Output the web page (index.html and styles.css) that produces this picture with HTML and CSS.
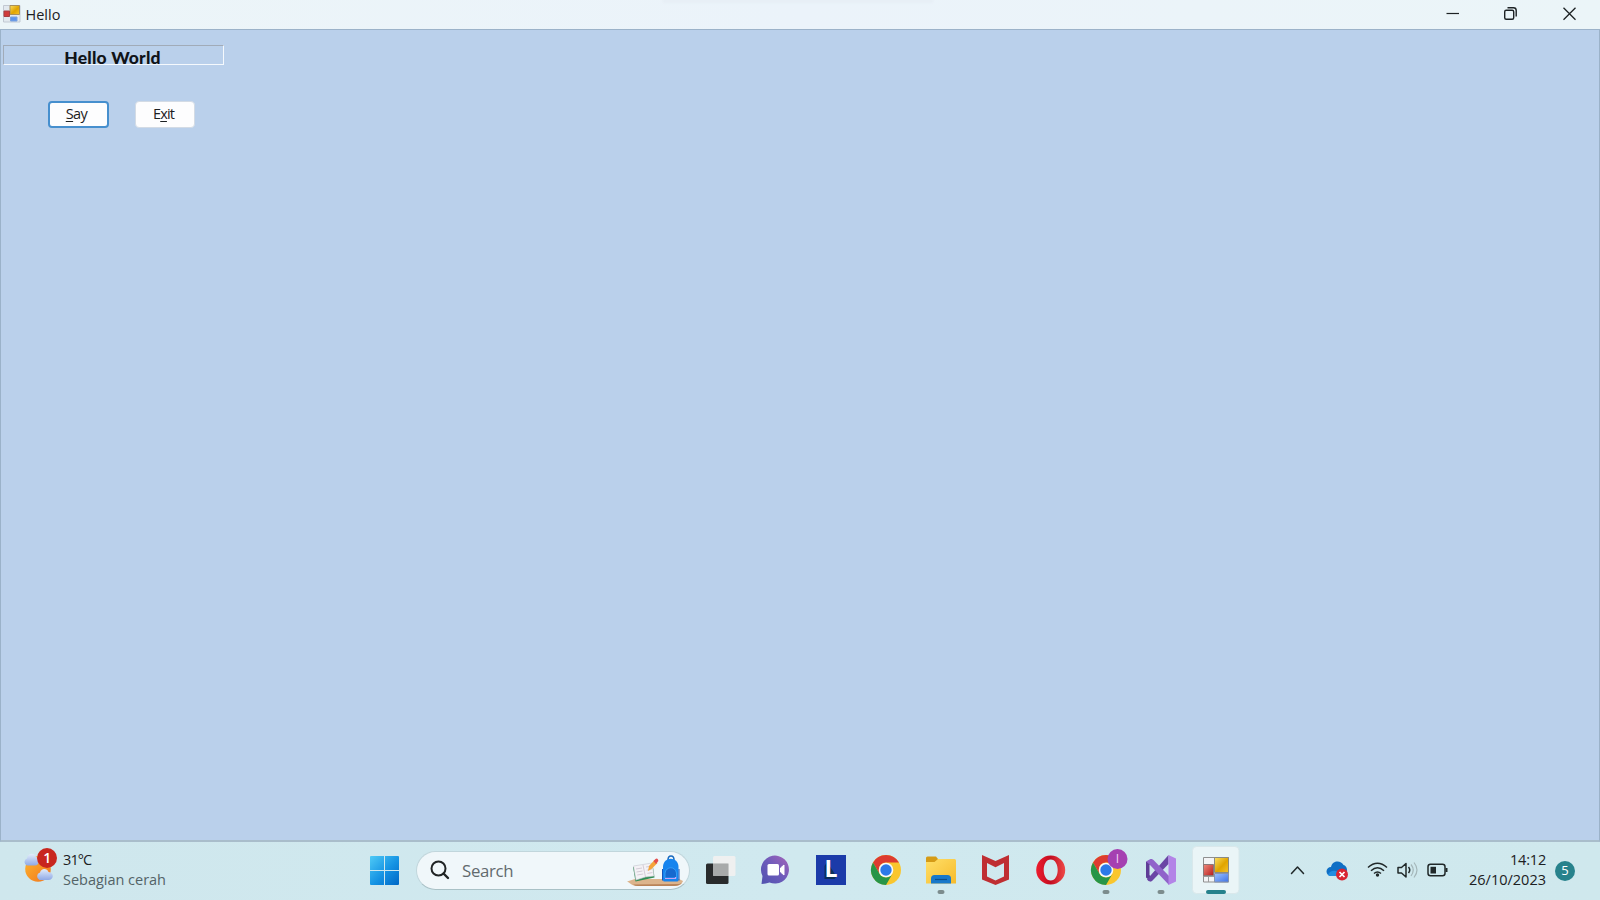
FILE: index.html
```html
<!DOCTYPE html>
<html lang="id">
<head>
<meta charset="utf-8">
<title>Hello</title>
<link rel="stylesheet" href="styles.css">
</head>
<body>
<svg class="defs" width="0" height="0" aria-hidden="true">
  <defs>
    <linearGradient id="win" x1="0" y1="0" x2="1" y2="1"><stop offset="0" stop-color="#4fcaf6"/><stop offset=".55" stop-color="#1492e3"/><stop offset="1" stop-color="#0067c5"/></linearGradient>
    <linearGradient id="sun" x1="0" y1="0" x2="1" y2="1"><stop offset="0" stop-color="#ffb52b"/><stop offset="1" stop-color="#ef7521"/></linearGradient>
    <linearGradient id="cloud" x1="0" y1="0" x2="0" y2="1"><stop offset="0" stop-color="#e3edfb"/><stop offset="1" stop-color="#8fa9e6"/></linearGradient>
    <linearGradient id="chat" x1="1" y1="0" x2="0" y2="1"><stop offset="0" stop-color="#a765b8"/><stop offset=".5" stop-color="#6c5bbb"/><stop offset="1" stop-color="#5052ae"/></linearGradient>
    <linearGradient id="folder" x1="0" y1="0" x2="1" y2="1"><stop offset="0" stop-color="#ffdf68"/><stop offset="1" stop-color="#f6bb2c"/></linearGradient>
    <linearGradient id="opera" x1="0" y1="0" x2="1" y2="0"><stop offset="0" stop-color="#ed1c2e"/><stop offset=".5" stop-color="#c30d20"/><stop offset="1" stop-color="#ef4a48"/></linearGradient>
    <linearGradient id="gold" x1="0" y1="0" x2="1" y2="1"><stop offset="0" stop-color="#fbe064"/><stop offset=".55" stop-color="#e0a400"/><stop offset="1" stop-color="#f4c32c"/></linearGradient>
    <linearGradient id="redsq" x1="0" y1="0" x2="1" y2="1"><stop offset="0" stop-color="#ef8a7c"/><stop offset="1" stop-color="#b71c1c"/></linearGradient>
    <linearGradient id="bluesq" x1="0" y1="0" x2="1" y2="1"><stop offset="0" stop-color="#9cc0ff"/><stop offset="1" stop-color="#3f73e6"/></linearGradient>
    <g id="chrome">
      <circle r="15" fill="#f9c62e"/>
      <path d="M-13-7.500A15 15 0 0 1 13-7.500H0A7.500 7.500 0 0 0-6.500-3.700V3.750Z" fill="#dd3b30"/>
      <path d="M-13-7.500A15 15 0 0 0 0 15L6.500 3.750A7.500 7.500 0 0 1-6.500 3.750Z" fill="#279548"/>
      <circle r="7.300" fill="#f7fafc"/><circle r="5.700" fill="#2c79e8"/>
    </g>
    <g id="form">
      <path d="M.5.500h25v24.500H.5z" fill="#f3f4f6" stroke="#8f8f8f"/>
      <path d="M5.500 19v6M.5 19.500h11" stroke="#9c9c9c" fill="none"/>
      <path d="M11.500.500h14v15h-14z" fill="url(#gold)" stroke="#8a8a84"/>
      <path d="M.5 7.500h10v11H.5z" fill="url(#redsq)" stroke="#8c7777"/>
      <path d="M11.500 16.500h14V25h-14z" fill="url(#bluesq)" stroke="#8793ad"/>
    </g>
  </defs>
</svg>

<div class="desktop">
  <header class="titlebar">
    <svg class="app-icon" width="18" height="18" viewBox="0 0 18 18">
      <path d="M.5.500h16.500v16.500H.5z" fill="#e2e9ef" stroke="#c2c9d2"/>
      <path d="M7 .500h9.500v9H7z" fill="url(#gold)" stroke="#a8905a"/>
      <path d="M1 6h5.500v5.500H1z" fill="#d03b3b" stroke="#a73f43"/>
      <path d="M7.500 12H14v4H7.500z" fill="#5c94ef" stroke="#7ba2dc"/>
    </svg>
    <span class="title">Hello</span>
    <div class="drop-shadow"></div>
    <svg class="controls" width="174" height="29" viewBox="1426 0 174 29" fill="none" stroke="#1d2224" stroke-width="1.200">
      <path d="M1446.500 13.500h12.500"/>
      <rect x="1504.700" y="10.200" width="9" height="9" rx="1.500" stroke-width="1.400"/>
      <path d="M1507.500 7.700h6a2.700 2.700 0 0 1 2.700 2.700v6" stroke-width="1.400"/>
      <path d="m1563.500 7.700 12 12m0-12-12 12" stroke-width="1.300"/>
    </svg>
  </header>

  <main class="form">
    <div class="label"><span>Hello World</span></div>
    <div class="buttons">
      <button class="btn focused"><u>S</u>ay</button>
      <button class="btn exit">E<u>x</u>it</button>
    </div>
  </main>

  <footer class="taskbar">
    <div class="weather">
      <svg width="40" height="58" viewBox="22 842 40 58">
        <circle cx="39" cy="869" r="12.800" fill="url(#sun)"/>
        <path d="M28 865.500a3.700 3.700 0 0 1 0-7c.5-6 8-6 9-1.500 4 .5 4 8.500-1 8.500Z" fill="url(#cloud)"/>
        <path d="M40.500 880a4 4 0 0 1 .5-7.500c1-5 7.500-4.500 8.500-.500 6 .5 5.500 8 0 8Z" fill="url(#cloud)"/>
        <circle cx="48" cy="858" r="10" fill="#c8261e"/>
        <text x="48.300" y="863" class="badge-text">1</text>
      </svg>
      <div class="weather-text"><div class="temp">31°C</div><div class="sky">Sebagian cerah</div></div>
    </div>

    <svg class="start" width="29" height="29" viewBox="0 0 29 29"><path d="M1 0H14V14H0V1Q0 0 1 0ZM15 0h13q1 0 1 1v13H15ZM0 15h14v14H1q-1 0-1-1ZM15 15h14v13q0 1-1 1H15Z" fill="url(#win)"/></svg>

    <div class="search">
      <svg width="20" height="20" viewBox="0 0 20 20" fill="none" stroke="#202425" stroke-width="2"><circle cx="8.500" cy="8.500" r="7"/><path d="m13.500 13.500 4.500 4.500" stroke-linecap="round" stroke-width="2.400"/></svg>
      <span class="search-text">Search</span>
      <svg class="doodle" width="56" height="34" viewBox="627 853 56 34">
        <path d="M627 881.500 635 879h44l4 2c-1 3-4 5-9 5h-37c-5 0-7-3-10-4.500Z" fill="#dcb48c"/>
        <path d="M633 884.500q2 1.500 5 1.500h36q5 0 8-3l-3 1Z" fill="#b98358"/>
        <path d="m633 867 2.500 14.500 19-4-1.500-10Z" fill="#2f8c53"/>
        <path d="m633.500 866 9.500-1.500 9-1.500 2 13-8.500 1-9.500 3Z" fill="#f4f2f6" stroke="#c3c6ce" stroke-width=".6"/>
        <path d="m643 865 2.500 12M636 869l6-1m-5.500 4 6-1m-5.300 4 6-1M646 867l5-.8m-4.300 4 5-.8m-4.300 4 5-.8" stroke="#c5bac9" stroke-width=".7" fill="none"/>
        <path d="m648 871 1-5 5.500-6 3 3-5.500 5.500Z" fill="#f3a43b"/><path d="m653.500 861 2-2q1.500-1 2.500.5t-.5 2.500l-1.500 2Z" fill="#e34d4d"/>
        <path d="M668 860q0-4 3-4t3 4" fill="none" stroke="#1768bd" stroke-width="1.500"/>
        <path d="M663 880v-13c0-11 15.500-11 15.500 0v13q0 1.500-1.500 1.500h-12.500q-1.500 0-1.500-1.500Z" fill="#1684ee"/>
        <path d="M665 875v-2c1-7 10.500-7 11.500 0v5H665Z" fill="#1769cf" stroke="#3ba6fa" stroke-width=".8"/>
        <path d="M665 878.500h10.500v-1.500" stroke="#c7a0f5" stroke-width="1.200" fill="none"/>
        <path d="M662.500 869v11.500m16.500-11.500v11.500" stroke="#1655ba"/>
      </svg>
    </div>

    <nav class="apps">
      <svg viewBox="693 842 55 58"><rect x="706" y="863.500" width="22.500" height="20.500" rx="1.500" fill="#292b2c"/><rect x="713" y="856" width="22.500" height="20" rx="1.500" fill="#f0f0f0" opacity=".94"/><path d="M713 863.500h15.500V876H714.500q-1.500 0-1.500-1.500Z" fill="#a8aaaa"/></svg>
      <svg viewBox="747.500 842 55 58"><path d="M761 884 762 876A14 14 0 1 1 769 882.500Q765 884 761 884Z" fill="url(#chat)"/><rect x="767" y="864" width="11.500" height="11.500" rx="1.500" fill="#fff"/><path d="m780 868 3.500-3v10l-3.500-3Z" fill="#fff" stroke="#fff" stroke-linejoin="round"/></svg>
      <svg viewBox="803 842 55 58"><path d="M816 855h30v30h-30z" fill="#1b3ba9"/><path d="m827 862-2.500 4v13h10l2-2.500Z" fill="#0b2f5a"/><text x="824.500" y="877" class="app-letter">L</text></svg>
      <svg viewBox="858 842 55 58"><use href="#chrome" transform="translate(886 870)"/></svg>
      <svg viewBox="913 842 55 58"><path d="M926 858q0-1.500 1.500-1.500h8.500l2 2.500v5h-12Z" fill="#d59b16"/><path d="M926 862h8.500l3.500-3h16.500q1.500 0 1.500 1.500v23H926Z" fill="url(#folder)"/><path d="M931 883.500v-5q0-3.500 3.500-3.500h13q3.500 0 3.500 3.500v5Z" fill="#1878ca"/><path d="M935 879.500h12" stroke="#0c4f8e" stroke-width="1.200"/><rect x="937.500" y="890" width="7" height="4" rx="2" fill="#7c8c8d"/></svg>
      <svg viewBox="968 842 55 58"><path d="m982 855 13.500 6 13.500-6v24.500l-13.500 5.500-13.500-5.500Zm5 8v13.500l8.500 4 8.500-4V863l-8.500 4.300Z" fill="#bf2e32" fill-rule="evenodd"/></svg>
      <svg viewBox="1023 842 55 58"><path d="M1050.700 855.500a14.500 14.500 0 1 1 0 29 14.500 14.500 0 1 1 0-29Zm0 4c-4.500 0-7 5-7 10.500s2.500 10.500 7 10.500 7-5 7-10.500-2.500-10.500-7-10.500Z" fill="url(#opera)" fill-rule="evenodd"/></svg>
      <svg viewBox="1078 842 55 58"><use href="#chrome" transform="translate(1106 870)"/><circle cx="1117.500" cy="859" r="10" fill="#a540b1"/><text x="1117.500" y="863" class="profile">I</text><rect x="1102.500" y="890" width="7" height="4" rx="2" fill="#7c8c8d"/></svg>
      <svg viewBox="1133 842 55 58"><path d="M1146 862v15.500l5 4v-4.500l-1.500-2v-10l2.500-2v-4Z" fill="#5f3c96"/><path d="M1147 879.500 1168.500 855v9L1152 881q-3 1.500-5-1.500Z" fill="#6a46a5"/><path d="M1146 861.500 1150.500 859q1.500-.500 3 1L1169 876v9L1150.500 865.500Q1148 863 1146 861.500Z" fill="#9063ca"/><path d="m1168.500 855 7.500 3.500v23l-7.500 3.500Z" fill="#b384e7"/><rect x="1157.500" y="890" width="7" height="4" rx="2" fill="#7c8c8d"/></svg>
      <svg viewBox="1188 842 55 58"><rect x="1192.500" y="846.500" width="46.500" height="47" rx="4" fill="#eaf5f7" stroke="#d9e8eb"/><use href="#form" transform="translate(1203 857)"/><rect x="1206" y="890" width="20" height="4" rx="2" fill="#25818c"/></svg>
    </nav>

    <svg class="tray" width="166" height="58" viewBox="1287 842 166 58" fill="none" stroke="#202829" stroke-width="1.500">
      <path d="m1291.500 873.500 6-6.500 6 6.500" stroke-linecap="round" stroke-linejoin="round"/>
      <g stroke="none"><path d="M1331 876a4.500 4.500 0 0 1 0-9c1.500-7 10-7 12.500-2 4 1 4 6 3 8l-7 3Z" fill="#0f6fc5"/><path d="M1328 875q2-5 8-4l6 4v1h-11q-2 0-3-1Z" fill="#228de1"/><circle cx="1342" cy="874.500" r="6" fill="#d92532"/></g>
      <path d="m1339.500 872 5 5m0-5-5 5" stroke="#fff" stroke-width="1.700"/>
      <path d="M1368 867.500q9.500-8.500 19 0M1371 870.800q6.500-6 13 0M1374 873.500q3.500-3 7 0"/>
      <circle cx="1377.500" cy="875" r="1.700" fill="#202829" stroke="none"/>
      <path d="M1398 867.500h3.500l4.500-4v13.500l-4.500-4h-3.500Z" stroke-linejoin="round"/><path d="M1408.500 867q2.500 3 0 6"/><path d="M1411 864.500q4.500 5.500 0 11.500M1414 862.500q6 7.500 0 15" stroke="#a4b6b9" stroke-width="1.200"/>
      <rect x="1428" y="864.300" width="17" height="11.500" rx="2.500"/><path d="M1430.500 866.800h5.500v6.700h-5.500z" fill="#202829" stroke="none"/><path d="M1446.500 868v4" stroke-width="2"/>
    </svg>
    <div class="clock"><div class="time">14:12</div><div class="date">26/10/2023</div></div>
    <div class="notifications">5</div>
  </footer>
</div>
</body>
</html>
```

FILE: styles.css
```css
* { box-sizing: border-box; }
body { margin: 0; font-family: "Open Sans", "Noto Sans", sans-serif; color: #1c2022; overflow: hidden; }
.defs { position: absolute; }
.desktop { width: 1600px; height: 900px; display: flex; flex-direction: column; }

.titlebar { height: 29px; flex: none; display: flex; align-items: center; padding-left: 3px; background: linear-gradient(90deg, #ecf5f8, #ebf3fa 50%, #ebf5f8); }
.app-icon { margin-top: -1px; }
.title { margin-left: 4.5px; font-size: 14.500px; line-height: 28px; letter-spacing: 0; }
.drop-shadow { width: 270px; height: 3px; margin: 0 auto 26px 603px; background: linear-gradient(#e2e9f0, #ebf3fa); filter: blur(1px); }

.form { flex: 1; background: #bad0eb; border: 1px solid #9bb2c9; border-bottom: 2px solid #a9bdcb; padding: 15px 0 0 2px; }
.label { width: 221px; height: 20px; overflow: hidden; border: 1px solid; border-color: #a1abb8 #f5f9fd #f5f9fd #a1abb8; border-right-width: 1.500px; text-align: center; }
.label span { display: block; margin-left: -2px; font: 900 17.500px/24px Lato, sans-serif; letter-spacing: .2px; color: #101318; }
.buttons { display: flex; gap: 26px; padding: 36px 0 0 45px; }
.btn { width: 61px; height: 27px; padding: 0 0 1px; border: 1px solid #d3dbe5; border-radius: 4px; background: #fdfdfe; font: 14.500px/22px "Open Sans", sans-serif; letter-spacing: -.6px; color: #1c2022; }
.btn.focused { border: 2px solid #468fce; padding-right: 4px; padding-bottom: 2px; }
.btn.exit { width: 60px; padding: 0 3px 1px 0; letter-spacing: -.9px; }
.btn u { text-underline-offset: 2px; text-decoration-skip-ink: none; }

.taskbar { height: 58px; flex: none; display: flex; align-items: center; background: linear-gradient(90deg, #cfe7ed, #d0e9ef 50%, #cfe8ed); padding-left: 22px; }
.weather { display: flex; width: 348px; flex: none; }
.weather svg { margin-left: -1px; }
.weather-text { padding: 8px 0 0 2px; font-size: 14.500px; line-height: 20px; }
.temp { letter-spacing: -.9px; }
.sky { color: #536367; letter-spacing: -.02px; white-space: nowrap; }
.badge-text { font: 600 14px "Open Sans"; fill: #fff; text-anchor: middle; }
.start { flex: none; margin-right: 17px; margin-top: -1px; }
.search { width: 274px; height: 39px; flex: none; display: flex; align-items: center; margin-top: -2px; border-radius: 20px; border: 1px solid #c1d6dc; border-bottom-color: #a9c1c6; background: #f0f7fa; padding-left: 13px; }
.search-text { margin-left: 12px; font-size: 16.800px; letter-spacing: -.3px; color: #626a6d; }
.doodle { margin: 0 6px 0 auto; }
.apps { display: flex; flex: none; margin-left: 3px; }
.apps svg { width: 55px; height: 58px; display: block; }
.app-letter { font: 700 23px "Open Sans"; fill: #fff; }
.profile { font: 12px "Open Sans"; fill: #f3d6f6; text-anchor: middle; }
.tray { flex: none; margin-left: 44px; }
.clock { width: 93px; flex: none; margin-top: -2px; text-align: right; font-size: 14.500px; line-height: 20px; }
.time { letter-spacing: -.2px; }
.date { letter-spacing: 0; }
.notifications { width: 20px; height: 20px; margin: -1px 0 0 9px; border-radius: 50%; background: #27828c; color: #fff; font-size: 13px; line-height: 19px; text-align: center; }
```
